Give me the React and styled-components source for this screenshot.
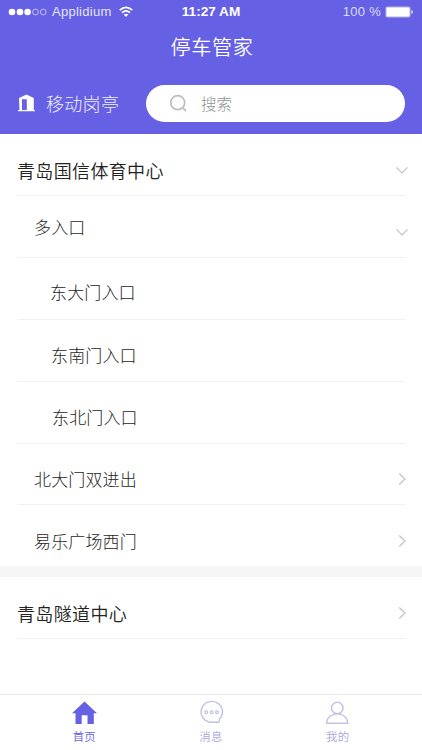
import React from 'react';
import styled, { createGlobalStyle } from 'styled-components';

const Global = createGlobalStyle`
  * { box-sizing: border-box; }
  body {
    margin: 0;
    background: #fff;
    font-family: "Noto Sans CJK SC", sans-serif;
  }
`;

const Screen = styled.div`
  width: 422px;
  height: 750px;
  display: flex;
  flex-direction: column;
  overflow: hidden;
  background: #fff;
`;

const Header = styled.header`
  height: 134px;
  flex: none;
  background: #6560e4;
  color: #fff;
`;

const StatusBar = styled.div`
  height: 24px;
  display: grid;
  grid-template-columns: 1fr auto 1fr;
  align-items: center;
  padding: 0 9px 0 8px;
  font: 13px/24px "Liberation Sans", Arial, sans-serif;
`;

const Carrier = styled.div`
  display: flex;
  align-items: center;
  color: #e6e5fd;
  svg { display: block; }
`;

const CarrierName = styled.span`
  margin: 0 7px 0 4px;
  font-size: 13px;
  letter-spacing: 0.27px;
`;

const Clock = styled.div`
  padding-left: 1px;
  font-size: 13.6px;
  font-weight: 700;
`;

const Power = styled.div`
  display: flex;
  align-items: center;
  justify-content: flex-end;
  gap: 4px;
  letter-spacing: 0.3px;
  color: #dddcfb;
  svg { display: block; }
`;

const Title = styled.h1`
  margin: 0;
  height: 46px;
  padding-left: 2px;
  font-size: 20px;
  line-height: 46px;
  font-weight: 350;
  letter-spacing: 0.7px;
  text-align: center;
`;

const SearchRow = styled.div`
  display: flex;
  align-items: center;
  height: 38px;
  margin-top: 14px;
  padding: 0 17px 0 18px;
`;

const Booth = styled.div`
  display: flex;
  align-items: center;
  gap: 11px;
  width: 128px;
  font-size: 18px;
  font-weight: 300;
  line-height: 38px;
  letter-spacing: 0.3px;
  color: #f0effe;
`;

const SearchField = styled.div`
  flex: 1;
  height: 37px;
  display: flex;
  align-items: center;
  gap: 13px;
  padding-left: 23px;
  border-radius: 19px;
  background: #fff;
  color: #929292;
  font-size: 15.5px;
  font-weight: 300;
  line-height: 36px;
`;

const List = styled.main`
  flex: 1;
`;

const Row = styled.div`
  height: ${(p) => p.$height || 62}px;
  margin: 0 17px;
  padding: 10px 0 0 ${(p) => p.$indent}px;
  display: flex;
  align-items: center;
  justify-content: space-between;
  border-bottom: ${(p) => (p.$last ? 'none' : '1px solid #f0f0f9')};
`;

const Label = styled.span`
  padding-bottom: ${(p) => p.$lift || 0}px;
  font-size: ${(p) => (p.$group ? 18 : 17)}px;
  font-weight: ${(p) => (p.$group ? 350 : 300)};
  letter-spacing: ${(p) => (p.$group ? 0.35 : 0.15)}px;
  line-height: 26px;
  color: ${(p) => (p.$group ? '#222' : '#262626')};
`;

const Arrow = styled.svg`
  display: block;
  flex: none;
  width: 12px;
  height: 12px;
  margin-right: -3px;
  transform: rotate(${(p) => (p.$open ? 90 : 0)}deg);
`;

const Divider = styled.div`
  height: 11px;
  background: #f6f6f6;
`;

const TabBar = styled.nav`
  flex: none;
  height: 56px;
  padding: 0 21px;
  display: grid;
  grid-template-columns: repeat(3, 1fr);
  border-top: 1px solid #e9e9ee;
`;

const Tab = styled.div`
  display: flex;
  flex-direction: column;
  align-items: center;
  padding-top: 5px;
  color: ${(p) => (p.$active ? '#6560e4' : '#aaa7e0')};
  font-size: 11.4px;
  font-weight: 350;
  line-height: 16px;
  letter-spacing: 0.3px;
  svg { display: block; margin-bottom: 3px; }
`;

const Signal = () => (
  <svg width="40" height="10" viewBox="0 0 40 10">
    {[4, 12, 19.6].map((x) => <circle key={x} cx={x} cy="5" r="3.3" fill="#fff" />)}
    {[27.5, 35.2].map((x) => (
      <circle key={x} cx={x} cy="5" r="2.9" fill="none" stroke="#d6d4fb" strokeWidth="0.8" />
    ))}
  </svg>
);

const Wifi = () => (
  <svg width="14" height="12" viewBox="0 0 14 12" fill="none" stroke="#fff" strokeWidth="1.6">
    <path d="M0.7 4.2 Q7 -1.4 13.3 4.2" />
    <path d="M3 6.7 Q7 3.1 11 6.7" />
    <path d="M4.7 8.6 Q7 6.7 9.3 8.6 L7 11Z" fill="#fff" stroke="none" />
  </svg>
);

const Battery = () => (
  <svg width="28" height="12" viewBox="0 0 28 12">
    <rect x="0.5" y="0.5" width="25" height="11" rx="1.8" fill="#b5b2f5" />
    <rect x="1.5" y="1.5" width="23" height="9" rx="1" fill="#fff" />
    <path d="M26.3 4 Q28 4.5 28 6 Q28 7.5 26.3 8Z" fill="#d6d4fb" />
  </svg>
);

const BoothIcon = () => (
  <svg width="17" height="18" viewBox="0 0 17 18" fill="#fff">
    <path fillRule="evenodd" d="M1 4 L8.5 0.5 L15.8 4 V16 H17 V17.3 H0 V16 H1.5Z M4 5.2 V16 H8.8 V5.2Z" />
  </svg>
);

const SearchIcon = () => (
  <svg width="19" height="19" viewBox="0 0 19 19" fill="none" stroke="#bdbdbd" strokeWidth="1.7">
    <circle cx="8.7" cy="8.7" r="7" />
    <path d="M14 14 L17 17.2" />
  </svg>
);

const Chevron = ({ open }) => (
  <Arrow $open={open} viewBox="0 0 12 12" fill="none" stroke="#bfbfbf" strokeWidth="1.1">
    <path d="M3.3 0.5 L9 6 L3.3 11.5" />
  </Arrow>
);

const HomeIcon = () => (
  <svg width="26" height="25" viewBox="0 0 26 25" fill="#6560e4">
    <path d="M13.5 1.5 L26 13.3 H22.8 V24 H16.5 V15.3 H10.7 V24 H4.5 V13.3 H1Z" />
  </svg>
);

const MessageIcon = () => (
  <svg width="26" height="25" viewBox="0 0 26 25" fill="none" stroke="#c2c0e8" strokeWidth="1.4">
    <path d="M21.3 19.2 A10.7 10.4 0 1 0 13.6 22.2 H20.8 Q21.8 21.5 21.3 19.2Z" />
    {[8.2, 13.6, 19].map((x) => <circle key={x} cx={x} cy="12.2" r="1.4" strokeWidth="1.2" />)}
  </svg>
);

const PersonIcon = () => (
  <svg width="26" height="25" viewBox="0 0 26 25" fill="none" stroke="#c2c0e8" strokeWidth="1.4">
    <circle cx="12.3" cy="8" r="5.8" />
    <path d="M1.7 23.2 C1.9 10.8 22.5 10.8 22.7 23.2Z" />
  </svg>
);

export default function App() {
  return (
    <>
      <Global />
      <Screen>
        <Header>
          <StatusBar>
            <Carrier>
              <Signal />
              <CarrierName>Applidium</CarrierName>
              <Wifi />
            </Carrier>
            <Clock>11:27 AM</Clock>
            <Power>100 %<Battery /></Power>
          </StatusBar>
          <Title>停车管家</Title>
          <SearchRow>
            <Booth><BoothIcon />移动岗亭</Booth>
            <SearchField><SearchIcon />搜索</SearchField>
          </SearchRow>
        </Header>
        <List>
          <Row $indent={0}><Label $group>青岛国信体育中心</Label><Chevron open /></Row>
          <Row $indent={17}><Label $lift={9}>多入口</Label><Chevron open /></Row>
          <Row $indent={33}><Label $lift={3}>东大门入口</Label></Row>
          <Row $indent={34}><Label $lift={2}>东南门入口</Label></Row>
          <Row $indent={35}><Label $lift={2}>东北门入口</Label></Row>
          <Row $indent={17} $height={61}><Label>北大门双进出</Label><Chevron /></Row>
          <Row $indent={17} $height={61} $last><Label>易乐广场西门</Label><Chevron /></Row>
          <Divider />
          <Row $indent={0}><Label $group>青岛隧道中心</Label><Chevron /></Row>
        </List>
        <TabBar>
          <Tab $active><HomeIcon />首页</Tab>
          <Tab><MessageIcon />消息</Tab>
          <Tab><PersonIcon />我的</Tab>
        </TabBar>
      </Screen>
    </>
  );
}
